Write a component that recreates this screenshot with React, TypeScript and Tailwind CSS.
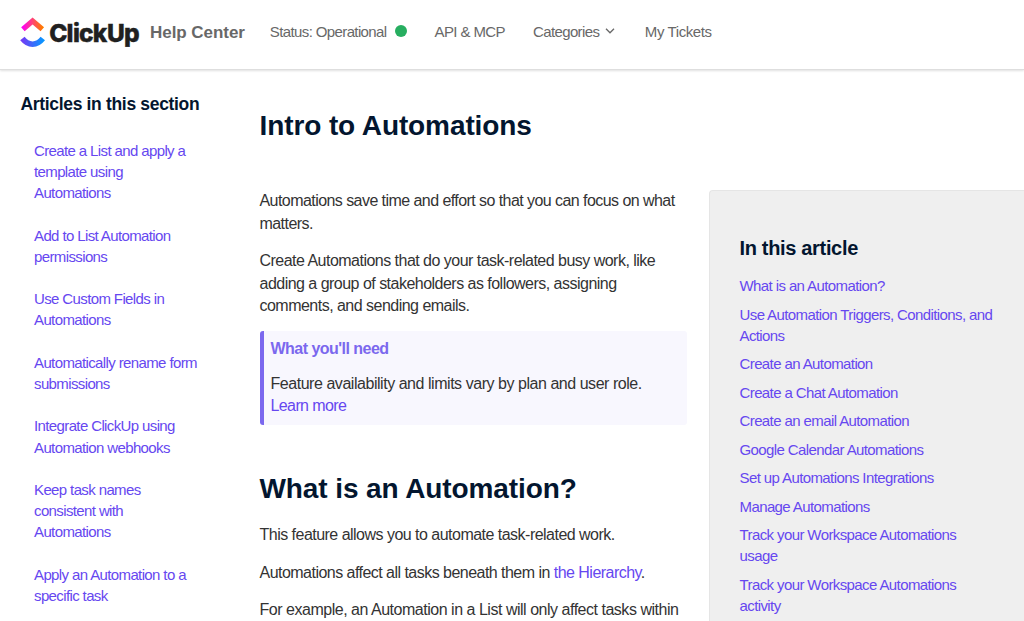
const sectionArticles = [
  "Create a List and apply a template using Automations",
  "Add to List Automation permissions",
  "Use Custom Fields in Automations",
  "Automatically rename form submissions",
  "Integrate ClickUp using Automation webhooks",
  "Keep task names consistent with Automations",
  "Apply an Automation to a specific task",
];

const tableOfContents = [
  "What is an Automation?",
  "Use Automation Triggers, Conditions, and Actions",
  "Create an Automation",
  "Create a Chat Automation",
  "Create an email Automation",
  "Google Calendar Automations",
  "Set up Automations Integrations",
  "Manage Automations",
  "Track your Workspace Automations usage",
  "Track your Workspace Automations activity",
];

function Logo() {
  return (
    <svg
      width="120"
      height="40"
      viewBox="0 0 120 40"
      className="shrink-0 overflow-visible"
      role="img"
      aria-label="ClickUp"
    >
      <defs>
        <linearGradient id="logoTop" x1="0" x2="1" y1="0" y2="0">
          <stop offset="0" stopColor="#ff02f0" />
          <stop offset="0.5" stopColor="#ff4573" />
          <stop offset="1" stopColor="#ff7a00" />
        </linearGradient>
        <linearGradient id="logoBottom" x1="0" x2="1" y1="0" y2="0">
          <stop offset="0" stopColor="#6f3df5" />
          <stop offset="1" stopColor="#0a95ff" />
        </linearGradient>
      </defs>
      <path
        d="M2.9 14.3 L12.6 6 L22.3 14.3"
        fill="none"
        stroke="url(#logoTop)"
        strokeWidth="5.4"
      />
      <path
        d="M2.4 23.6 Q6.8 29.2 12.6 29.2 Q18.4 29.2 22.8 23.6"
        fill="none"
        stroke="url(#logoBottom)"
        strokeWidth="5.6"
      />
      <text
        x="29.2 46.6 52.9 58.9 72.8 87 104"
        y="26.6"
        strokeWidth="0.4"
        className="fill-[#202020] stroke-[#202020] font-[Inter] text-[24.5px] font-extrabold"
      >
        ClickUp
      </text>
    </svg>
  );
}

function Header() {
  return (
    <header className="flex h-[70px] items-start border-b border-[#dedede] pl-5 text-[15px] tracking-[-0.62px] text-[#686868] shadow-[0_1px_2px_rgba(0,0,0,0.12)]">
      <div className="flex items-start pt-[15px]">
        <Logo />
        <span className="ml-2.5 text-[17px] leading-9 font-bold tracking-[-0.05px]">
          Help Center
        </span>
      </div>
      <nav className="ml-[25px] flex pt-5 leading-6">
        <a className="flex items-center">
          Status: Operational
          <span className="mb-0.5 ml-2 size-3 rounded-full bg-[#27ae60]" />
        </a>
        <a className="ml-7 tracking-[-0.6px]">API &amp; MCP</a>
        <a className="ml-7 flex items-center">
          Categories
          <svg
            viewBox="0 0 10 6"
            className="mb-0.5 ml-1.5 h-1.5 w-2.5"
            fill="none"
            stroke="currentColor"
            strokeWidth="1.3"
          >
            <path d="M1 0.8 L5 4.8 L9 0.8" />
          </svg>
        </a>
        <a className="ml-[29.5px] tracking-[-0.4px]">My Tickets</a>
      </nav>
    </header>
  );
}

function Sidebar() {
  return (
    <aside className="w-[239px] shrink-0 pt-[22px]">
      <h3 className="text-[17.5px] leading-6 font-bold tracking-[-0.33px] text-[#03162f]">
        Articles in this section
      </h3>
      <ul className="mt-6 ml-[13.5px] flex w-[166px] flex-col gap-[21.4px] text-[15px] leading-[21.1px] tracking-[-0.62px] text-[#6647f0]">
        {sectionArticles.map((title) => (
          <li key={title}>{title}</li>
        ))}
      </ul>
    </aside>
  );
}

function Article() {
  return (
    <article className="w-[428px] shrink-0 pt-[0.5px] text-base leading-[22.5px] tracking-[-0.46px] text-[#333]">
      <p className="tracking-[-0.56px]">
        Automations save time and effort so that you can focus on what matters.
      </p>
      <p className="mt-[15px] tracking-[-0.52px]">
        Create Automations that do your task-related busy work, like adding a
        group of stakeholders as followers, assigning comments, and sending
        emails.
      </p>
      <div className="mt-[13px] h-[94px] w-[427px] rounded-[3px] border-l-4 border-[#7b68ee] bg-[#f8f7fe] pt-[7.5px] pr-4 pl-[7px]">
        <p className="font-bold tracking-[-0.53px] text-[#7b68ee]">
          What you'll need
        </p>
        <p className="mt-3">
          Feature availability and limits vary by plan and user role.{" "}
          <a className="tracking-[-0.6px] text-[#6647f0]">Learn more</a>
        </p>
      </div>
      <h2 className="mt-11 text-[28px] leading-10 font-bold tracking-[-0.1px] text-[#03162f]">
        What is an Automation?
      </h2>
      <p className="mt-[15.5px] tracking-[-0.52px]">
        This feature allows you to automate task-related work.
      </p>
      <p className="mt-[15px] tracking-[-0.53px]">
        Automations affect all tasks beneath them in{" "}
        <a className="text-[#6647f0]">the Hierarchy</a>.
      </p>
      <p className="mt-[15px] tracking-[-0.48px]">
        For example, an Automation in a List will only affect tasks within
      </p>
    </article>
  );
}

function TableOfContents() {
  return (
    <aside className="ml-[21px] h-[500px] flex-1 rounded-tl-[4px] border-t border-l border-[#e5e5e5] bg-[#efefef] pt-[45px] pl-[30px]">
      <h3 className="text-xl leading-6 font-bold tracking-[-0.33px] text-[#03162f]">
        In this article
      </h3>
      <ul className="mt-[15.5px] flex w-[256px] flex-col gap-[7.1px] text-[15px] leading-[21.35px] tracking-[-0.6px] text-[#6647f0]">
        {tableOfContents.map((title) => (
          <li key={title}>{title}</li>
        ))}
      </ul>
    </aside>
  );
}

function App() {
  return (
    <div className="h-[621px] overflow-hidden bg-white font-['Liberation_Sans',Arial,sans-serif]">
      <Header />
      <div className="flex pl-[20.5px]">
        <Sidebar />
        <main className="flex-1">
          <h1 className="pt-9 text-[28px] leading-10 font-bold tracking-[-0.1px] text-[#03162f]">
            Intro to Automations
          </h1>
          <div className="mt-[43.7px] flex">
            <Article />
            <TableOfContents />
          </div>
        </main>
      </div>
    </div>
  );
}

export default App;
